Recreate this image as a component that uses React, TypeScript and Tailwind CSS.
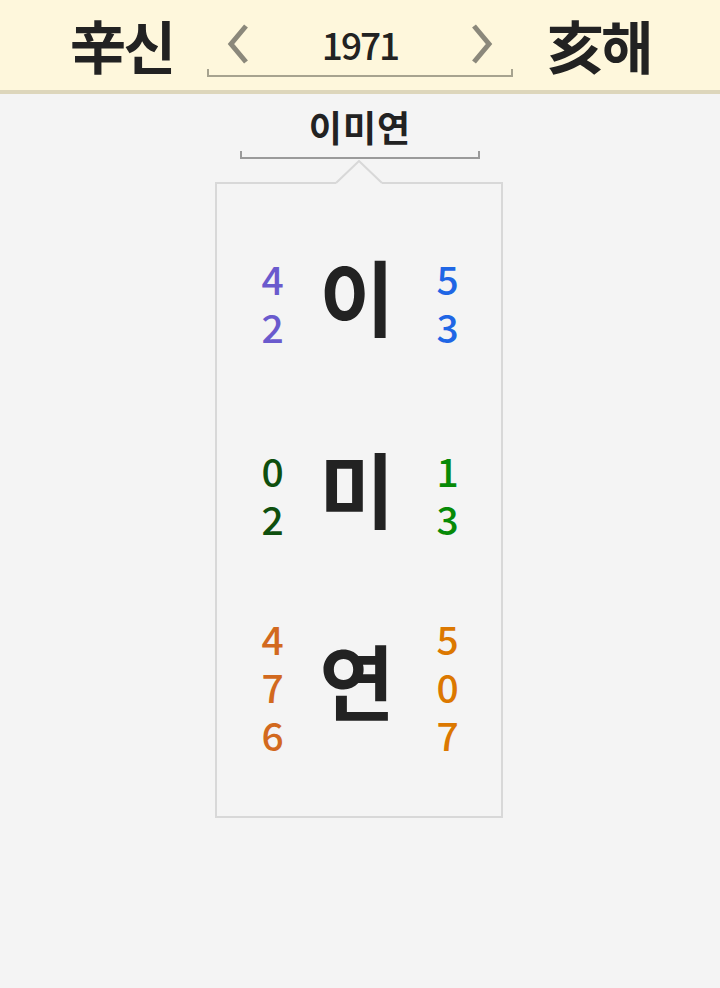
const FONT = "font-['Noto_Sans_CJK_KR','Noto_Sans',sans-serif]";

interface Syllable {
  char: string;
  left: { digits: string[]; color: string };
  right: { digits: string[]; color: string };
}

const syllables: Syllable[] = [
  {
    char: "이",
    left: { digits: ["4", "2"], color: "text-[#6a5acd]" },
    right: { digits: ["5", "3"], color: "text-[#1f66e5]" },
  },
  {
    char: "미",
    left: { digits: ["0", "2"], color: "text-[#0e4f0e]" },
    right: { digits: ["1", "3"], color: "text-[#078a07]" },
  },
  {
    char: "연",
    left: { digits: ["4", "7", "6"], color: "text-[#d2691e]" },
    right: { digits: ["5", "0", "7"], color: "text-[#dc7800]" },
  },
];

function Chevron({ dir }: { dir: "left" | "right" }) {
  const points = dir === "left" ? "19,3 4,21 19,39" : "3,3 18,21 3,39";
  return (
    <svg width="22" height="42" viewBox="0 0 22 42">
      <polyline points={points} fill="none" stroke="#8b887b" strokeWidth="5" />
    </svg>
  );
}

function DigitColumn({ digits, color }: { digits: string[]; color: string }) {
  return (
    <div className={`w-[40px] flex flex-col items-center ${color}`}>
      {digits.map((d, i) => (
        <span key={i} className="text-[39px] leading-[48px] font-medium tracking-[-1px]">
          {d}
        </span>
      ))}
    </div>
  );
}

export default function App() {
  return (
    <div className={`w-[720px] h-[988px] bg-[#f4f4f4] ${FONT} text-[#222]`}>
      <header className="h-[94px] bg-[#fef7dc] border-b-4 border-[#ddd6bb] flex items-center justify-center gap-[34px]">
        <span className="text-[57px] font-bold leading-none tracking-[-3px] pb-[2px]">辛신</span>
        <div className="w-[306px] flex flex-col pt-[6px]">
          <div className="flex items-center justify-between px-[20px] h-[50px]">
            <Chevron dir="left" />
            <span className="text-[37px] font-medium leading-none tracking-[-2px]">1971</span>
            <Chevron dir="right" />
          </div>
          <div className="h-[8px] border-x-2 border-b-2 border-[#a7a38f]" />
        </div>
        <span className="text-[57px] font-bold leading-none tracking-[-3px] pb-[2px]">亥해</span>
      </header>

      <div className="flex flex-col items-center">
        <div className="mt-[7px] text-[36px] font-bold leading-[50px] tracking-[1px]">이미연</div>
        <div className="w-[240px] h-[8px] border-x-2 border-b-2 border-[#9a9a9a]" />

        <div className="relative mt-[23px] -ml-[2px] w-[288px] h-[636px] border-2 border-[#d8d8d8] pt-[22px]">
          <svg
            className="absolute left-[117px] top-[-24px]"
            width="50"
            height="24"
            viewBox="0 0 50 24"
          >
            <rect x="2" y="20" width="46" height="4" fill="#f4f4f4" />
            <polyline points="2,23 25,1 48,23" fill="none" stroke="#d8d8d8" strokeWidth="2" />
          </svg>
          {syllables.map((s) => (
            <div key={s.char} className="h-[192px] flex items-center pl-[35px]">
              <DigitColumn {...s.left} />
              <div className="ml-[15px] w-[100px] text-center text-[82px] font-bold leading-none pb-[14px]">
                {s.char}
              </div>
              <div className="ml-[20px]">
                <DigitColumn {...s.right} />
              </div>
            </div>
          ))}
        </div>
      </div>
    </div>
  );
}
